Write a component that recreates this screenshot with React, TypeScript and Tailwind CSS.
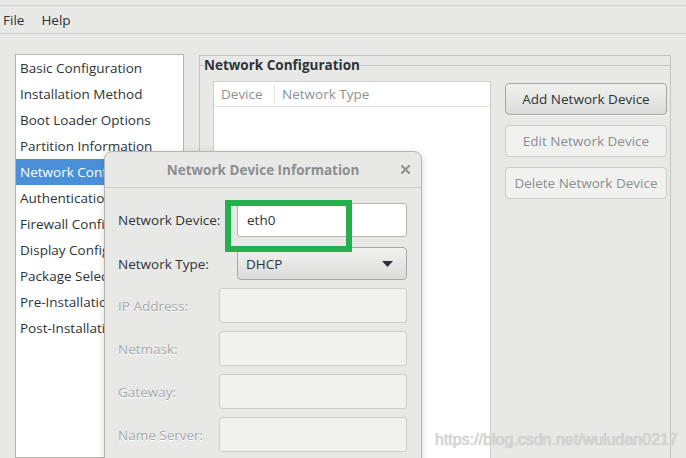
import React from "react";

const items = [
  "Basic Configuration",
  "Installation Method",
  "Boot Loader Options",
  "Partition Information",
  "Network Configuration",
  "Authentication",
  "Firewall Configuration",
  "Display Configuration",
  "Package Selection",
  "Pre-Installation Script",
  "Post-Installation Script",
];

function DisabledRow({ label }: { label: string }) {
  return (
    <div className="flex items-center">
      <span className="text-[#a7a9a9] [text-shadow:0_1px_0_#ffffff]">{label}</span>
      <div className="ml-auto w-[188px] h-[35px] rounded-[3px] border border-[#cdcdc9] bg-[#f1f1f0]" />
    </div>
  );
}

export default function App() {
  return (
    <div
      className="relative w-[686px] h-[458px] overflow-hidden bg-[#e8e8e7] text-[13.5px] leading-[18px] text-[#2e3436] flex flex-col"
      style={{ fontFamily: "'Open Sans', Lato, sans-serif" }}
    >
      {/* top strip + menu */}
      <div className="h-[6px] border-b border-[#d0d0ce] shrink-0" />
      <div className="h-[28px] border-b border-[#d0d0ce] shrink-0 flex items-center gap-[17px] pl-[3px]">
        <span>File</span>
        <span>Help</span>
      </div>

      {/* main */}
      <div className="flex flex-1 min-h-0 pl-[15px] pt-[20px]">
        {/* left list */}
        <div className="w-[169px] border border-[#b6b6b3] bg-white flex flex-col shrink-0">
          {items.map((it, i) => (
            <div
              key={it}
              className={
                "h-[26px] flex items-center pl-[4px] whitespace-nowrap overflow-hidden " +
                (i === 4 ? "bg-[#4a90d9] text-white" : "")
              }
            >
              {it}
            </div>
          ))}
        </div>

        {/* right panel */}
        <div className="ml-[15px] mt-[1px] w-[472px] border-l border-t border-r border-[#c4c4c1] flex flex-col shrink-0">
          <div className="h-[18px] flex items-center shrink-0">
            <div className="w-[4px] h-px bg-[#c4c4c1]" />
            <span className="font-bold whitespace-nowrap">Network Configuration</span>
            <div className="flex-1 h-px bg-[#c4c4c1]" />
          </div>
          <div className="flex flex-1 pl-[13px] pt-[7px] pr-[3px]">
            <div className="w-[278px] bg-white border border-[#cfcfcc] border-b-0 flex flex-col">
              <div className="h-[25px] border-b border-[#e2e2e0] flex items-center text-[#8e9192]">
                <span className="pl-[7px] w-[61px] border-r border-[#e2e2e0] h-[19px] flex items-center">Device</span>
                <span className="pl-[7px]">Network Type</span>
              </div>
            </div>
            <div className="ml-[14px] mt-[2px] w-[162px] flex flex-col gap-[10px]">
              <div className="h-[32px] rounded-[4px] border border-[#a6a6a3] bg-gradient-to-b from-[#f1f1f0] to-[#dcdcdb] flex items-center justify-center shadow-[0_1px_0_rgba(255,255,255,0.6)]">
                Add Network Device
              </div>
              <div className="h-[32px] rounded-[4px] border border-[#cdcdc9] bg-[#f1f1f0] text-[#8b8e8f] flex items-center justify-center">
                Edit Network Device
              </div>
              <div className="h-[32px] rounded-[4px] border border-[#cdcdc9] bg-[#f1f1f0] text-[#8b8e8f] flex items-center justify-center whitespace-nowrap">
                Delete Network Device
              </div>
            </div>
          </div>
        </div>
      </div>

      {/* dialog window */}
      <div className="absolute left-[104px] top-[151px] w-[318px] h-[330px] rounded-t-[8px] border border-[#b6b6b3] bg-[#e8e8e7] flex flex-col shadow-[0_2px_8px_rgba(0,0,0,0.15)]">
        <div className="h-[36px] border-b border-[#cdcdc9] flex items-center justify-center relative shrink-0">
          <span className="font-bold text-[#8b8e8f]">Network Device Information</span>
          <svg className="absolute left-[296px] top-[13px]" width="9" height="9" viewBox="0 0 9 9">
            <path d="M1 1 L8 8 M8 1 L1 8" stroke="#8b8e8f" strokeWidth="2" strokeLinecap="round" />
          </svg>
        </div>
        <div className="flex flex-col pl-[13px] pr-[14px] pt-[15px]">
          <div className="flex items-center">
            <span>Network Device:</span>
            <div className="ml-auto w-[170px] h-[34px] rounded-[3px] border border-[#b6b6b3] bg-white flex items-center pl-[9px]">
              eth0
            </div>
          </div>
          <div className="flex items-center mt-[10px]">
            <span>Network Type:</span>
            <div className="ml-auto w-[170px] h-[33px] rounded-[4px] border border-[#a6a6a3] bg-gradient-to-b from-[#f1f1f0] to-[#dcdcdb] flex items-center pl-[8px] pr-[13px]">
              <span>DHCP</span>
              <svg className="ml-auto" width="11" height="6" viewBox="0 0 11 6">
                <path d="M0 0 L11 0 L5.5 6 Z" fill="#2e3436" />
              </svg>
            </div>
          </div>
          <div className="flex flex-col gap-[8px] mt-[8px]">
            <DisabledRow label="IP Address:" />
            <DisabledRow label="Netmask:" />
            <DisabledRow label="Gateway:" />
            <DisabledRow label="Name Server:" />
          </div>
        </div>
      </div>

      {/* green annotation */}
      <div className="absolute left-[225px] top-[200px] w-[127px] h-[52px] border-[6px] border-[#22b14c]" />

      {/* watermark */}
      <div
        className="absolute left-[435px] top-[430px] text-[16px] leading-[20px] text-[#d6d6d6] whitespace-nowrap [text-shadow:0_0_1px_rgba(120,120,120,0.5)]"
        style={{ fontFamily: "'Liberation Sans', Arial, sans-serif" }}
      >
        https://blog.csdn.net/wuludan0217
      </div>
    </div>
  );
}
